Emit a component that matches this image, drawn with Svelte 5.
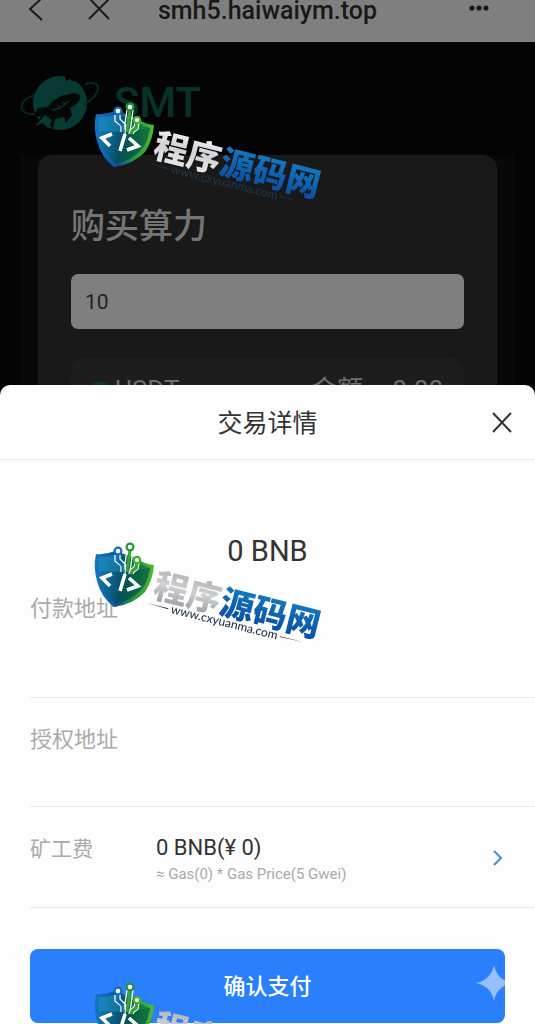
<script>
  let amount = '10';
  let open = true;

  const watermarks = [
    { id: 'top', dark: true },
    { id: 'middle', dark: false },
    { id: 'bottom', dark: false }
  ];

  const addresses = ['付款地址', '授权地址'];

  const closeSheet = () => {
    open = false;
  };
</script>

<div class="page">
  <header class="topbar">
    <div class="nav">
      <button class="icon-btn" aria-label="返回">
        <svg width="22" height="22" viewBox="0 0 22 22"><path d="M16 -2 4 9 16 20" /></svg>
      </button>
      <button class="icon-btn" aria-label="关闭">
        <svg width="22" height="22" viewBox="0 0 22 22"><path d="M1 -2 21 19M22 -2 1 19" /></svg>
      </button>
    </div>
    <h1>smh5.haiwaiym.top</h1>
    <button class="icon-btn more" aria-label="更多">
      <svg width="20" height="22" viewBox="0 0 20 22">
        <circle cx="3" cy="8" r="2.6" /><circle cx="10" cy="8" r="2.6" /><circle cx="17" cy="8" r="2.6" />
      </svg>
    </button>
  </header>

  <main>
    <div class="brand">
      <svg width="80" height="60" viewBox="0 0 80 60">
        <circle cx="40" cy="30" r="27" fill="#0f7565" />
        <path d="M44 0 46 8 50 6 54 9 58 5 58 0Z" fill="#080808" />
        <path d="M15 22C5 25 0 31 2 36c2 6 12 6 22 3M65 11c7-2 12-1 13 3 1 6-5 12-14 18" fill="none" stroke="#0c4f45" stroke-width="2" />
        <path d="M50 21c-10 1-19 7-22 13l-10 1-5 9 8-1-4 9 9-4 7 8 2-10 9-2 2 6 6-8-2-7c6-3 11-7 10-13q-6-3-10-1Z" fill="#0a0f0d" />
        <path d="M32 37l8-2 9-7M37 32l4 3M43 29l3 3" fill="none" stroke="#0f6557" stroke-width="1.5" />
        <path d="m25 42-10 11 10-4 3 7 4-9Z" fill="#0f7565" />
      </svg>
      <span>SMT</span>
    </div>

    <div class="panel">
      <section class="card">
        <h2><label for="amount">购买算力</label></h2>
        <input id="amount" type="text" inputmode="numeric" bind:value={amount} />
        <div class="asset">
          <svg width="16" height="16" viewBox="0 0 16 16">
            <rect width="16" height="16" rx="2" fill="#0f6f62" />
            <path d="M3 5h10M8 5v8" stroke="#2b2b2b" stroke-width="2" />
          </svg>
          <span>USDT</span>
          <span class="total">金额</span>
          <span>0.00</span>
        </div>
      </section>
    </div>
  </main>
</div>

{#if open}
  <div class="mask"></div>
  <div class="sheet" role="dialog" aria-modal="true" aria-labelledby="sheet-title">
    <div class="sheet-head">
      <h2 id="sheet-title">交易详情</h2>
      <button class="icon-btn" aria-label="关闭" on:click={closeSheet}>
        <svg width="22" height="22" viewBox="0 0 22 22"><path d="M2 1 20 20M20 1 2 20" /></svg>
      </button>
    </div>

    <p class="value">0 BNB</p>

    <div class="rows">
      {#each addresses as address}
        <div class="row">{address}</div>
      {/each}
      <button class="row fee">
        <span class="fee-label">矿工费</span>
        <span class="fee-text">
          <span class="fee-value">0 BNB(¥ 0)</span>
          <span class="fee-note">≈ Gas(0) * Gas Price(5 Gwei)</span>
        </span>
        <svg width="10" height="18" viewBox="0 0 10 18"><path d="M1 1 8 8 1 15" /></svg>
      </button>
    </div>

    <button class="confirm">
      确认支付
      <svg class="spark" width="36" height="36" viewBox="0 0 36 36">
        <path d="M18 0C20 10 26 16 36 18 26 20 20 26 18 36 16 26 10 20 0 18 10 16 16 10 18 0Z" />
      </svg>
    </button>
  </div>
{/if}

<div class="watermarks">
  {#each watermarks as mark (mark.id)}
    <svg class="watermark" class:dark={mark.dark} width="240" height="440" viewBox="0 0 240 440">
      <defs>
        <linearGradient id="edge-{mark.id}" x1="0" x2="1" y1="0" y2="0">
          <stop offset="0" stop-color="#1478be" />
          <stop offset="0.4" stop-color="#0e50a0" />
          <stop offset="0.65" stop-color="#27953c" />
          <stop offset="1" stop-color="#50ba2c" />
        </linearGradient>
        <linearGradient id="face-{mark.id}" x1="0" x2="1" y1="0.3" y2="0.5">
          <stop offset="0" stop-color="#1378b8" />
          <stop offset="0.45" stop-color="#07536f" />
          <stop offset="0.7" stop-color="#08743f" />
          <stop offset="1" stop-color="#249441" />
        </linearGradient>
        <linearGradient id="silver-{mark.id}" x1="0" x2="0" y1="0" y2="1">
          <stop offset="0" stop-color={mark.dark ? '#ffffff' : '#a2a4a8'} />
          <stop offset="0.5" stop-color={mark.dark ? '#d0d1d4' : '#cfd0d2'} />
          <stop offset="1" stop-color={mark.dark ? '#eeeeee' : '#8f9196'} />
        </linearGradient>
        <linearGradient id="blue-{mark.id}" x1="0" x2="0" y1="0" y2="1">
          <stop offset="0" stop-color="#1684cc" />
          <stop offset="1" stop-color="#08479b" />
        </linearGradient>
      </defs>

      <path fill="url(#edge-{mark.id})" d="M6 18Q15 19 25 15L47 22Q54 28 64 29Q63 44 55 56Q44 68 24 71Q11 61 7 45Q3 31 6 18Z" />
      <path fill="url(#face-{mark.id})" d="M9 21Q18 22 27 18L46 25Q53 30 60 32Q58 46 51 54Q41 65 25 68Q14 59 10 44Q7 31 9 21Z" />
      <path fill="#21a0d0" opacity="0.35" d="M9 21Q18 22 27 18L33 36 9 35Z" />
      <path fill="#043c4b" opacity="0.35" d="M33 36 60 32Q58 46 51 54Q41 65 25 68Z" />

      <g fill="none" stroke-linejoin="round">
        <path stroke="#fff" stroke-width="1.3" d="M25 19 25 25 31 30 31 36M30 19 30 23 36 29 35 38M37 14 34 34M43 14 40 36M45 27 44 31 40 34 39 38M49 27 48 33 44 36 43 38" />
        <path stroke="#146db5" stroke-width="2.5" d="M28 18 27 24 33 30 33 36" />
        <path stroke="#35a62f" stroke-width="3" d="M40 14 37 36M47 26 46 32 42 35 41 38" />
        <circle cx="28" cy="15" r="3.4" fill="#fff" stroke="#176db7" stroke-width="2.2" />
        <circle cx="40" cy="11" r="3.4" fill="#fff" stroke="#269535" stroke-width="2.2" />
        <circle cx="47" cy="24" r="3.2" fill="#fff" stroke="#43ae2c" stroke-width="2.2" />
      </g>
      <path d="M22 38 12 42 20 50M35 38 30 55M39 42 48 50 37 54" fill="none" stroke="#fff" stroke-width="3.6" />

      <g transform="translate(65 48) rotate(14)">
        <text class="mark-name" x="0" y="13">
          <tspan fill="url(#silver-{mark.id})">程序</tspan><tspan fill="url(#blue-{mark.id})">源码网</tspan>
        </text>
      </g>
      <g class="mark-site" transform="translate(57 67) rotate(14)">
        <path d="M0 0 22 0 22 1ZM137 0 137 1 161 0Z" />
        <text x="25" y="4">www.cxyuanma.com</text>
      </g>
    </svg>
  {/each}
</div>

<style>
  :global(body) {
    background: #040404;
    font-family: Roboto, 'Noto Sans CJK SC', sans-serif;
  }

  h1,
  h2,
  p {
    margin: 0;
    font-weight: 400;
  }

  button {
    padding: 0;
    border: 0;
    background: none;
    font: inherit;
    cursor: pointer;
  }

  .icon-btn {
    display: flex;
  }

  .icon-btn svg {
    fill: none;
    stroke: #333;
    stroke-width: 2;
  }

  .page {
    height: 100vh;
    overflow: hidden;
    background: #080808;
  }

  .topbar {
    display: grid;
    grid-template-columns: 1fr auto 1fr;
    align-items: start;
    padding: 0 26px 20px;
    background: #fff;
  }

  .topbar h1 {
    font-size: 25px;
    font-weight: 500;
    line-height: 22px;
    color: #333;
  }

  .nav {
    display: flex;
    gap: 40px;
  }

  .topbar .more {
    justify-self: end;
    margin-right: 20px;
  }

  .topbar .more svg {
    fill: #333;
    stroke: none;
  }

  .brand {
    display: flex;
    align-items: center;
    gap: 14px;
    padding: 31px 20px 22px;
    font-size: 42px;
    font-weight: 500;
    line-height: 60px;
    color: #0d6456;
  }

  .panel {
    margin: 0 21px;
    padding: 0 17px;
    background: #101010;
  }

  .card {
    padding: 48px 32px;
    border: 1px solid #37373c;
    border-radius: 14px;
    background: #323232;
  }

  .card h2 {
    font-size: 34px;
    font-weight: 500;
    line-height: 44px;
    color: #fff;
    opacity: 0.9;
  }

  .card input {
    box-sizing: border-box;
    width: 100%;
    height: 55px;
    margin: 26px 0 29px;
    padding: 0 14px;
    border: 0;
    border-radius: 7px;
    background: #fff;
    font: 21px Roboto, sans-serif;
    color: #444;
  }

  .asset {
    display: flex;
    align-items: center;
    gap: 7px;
    padding: 16px 21px;
    border-radius: 14px;
    background: #3a3a3a;
    font-size: 26px;
    line-height: 32px;
    color: #ddd;
  }

  .asset .total {
    margin: 0 22px 0 auto;
  }

  .mask {
    position: fixed;
    inset: 0;
    background: rgba(0, 0, 0, 0.5);
  }

  .sheet {
    position: fixed;
    inset: auto 0 0;
    border-radius: 10px 10px 0 0;
    background: #fdfdfd;
    color: #333;
  }

  .sheet-head {
    display: grid;
    grid-template-columns: 1fr auto 1fr;
    align-items: center;
    padding: 2px 22px 0;
    border-bottom: 1px solid #eee;
  }

  .sheet-head h2 {
    grid-column: 2;
    padding-top: 2px;
    font-size: 25px;
    line-height: 70px;
  }

  .sheet-head .icon-btn {
    justify-self: end;
  }

  .value {
    padding-top: 71px;
    font-size: 29px;
    line-height: 40px;
    text-align: center;
  }

  .rows {
    padding-left: 30px;
    font-size: 22px;
    line-height: 32px;
    color: #aaa;
  }

  .row {
    padding: 26px 0 50px;
    border-bottom: 1px solid #e9e9e9;
  }

  .row:first-child {
    padding: 22px 0 72px;
  }

  .fee {
    display: grid;
    grid-template-columns: 126px 1fr auto;
    width: 100%;
    padding: 26px 32px 22px 0;
    color: #aaa;
    text-align: left;
  }

  .fee-label {
    font-size: 21px;
  }

  .fee-text {
    display: grid;
  }

  .fee-value {
    font-size: 22px;
    line-height: 30px;
    color: #333;
  }

  .fee-note {
    font-size: 15px;
    line-height: 22px;
  }

  .fee svg {
    align-self: center;
    fill: none;
    stroke: #4a8ccc;
    stroke-width: 2;
  }

  .confirm {
    position: relative;
    display: block;
    width: calc(100% - 60px);
    margin: 41px 30px 1px;
    padding-top: 2px;
    border-radius: 8px;
    background: #2a7ffc;
    font-size: 22px;
    font-weight: 500;
    line-height: 72px;
    color: #fff;
  }

  .spark {
    position: absolute;
    top: 16px;
    right: -7px;
    fill: rgba(255, 255, 255, 0.5);
  }

  .watermarks {
    position: fixed;
    inset: 0;
    display: flex;
    flex-direction: column;
    padding: 96px 0 0 90px;
    overflow: hidden;
    pointer-events: none;
  }

  .watermark {
    flex: none;
  }

  .mark-name {
    font-family: 'Noto Sans CJK SC', sans-serif;
    font-size: 34px;
    font-weight: 900;
  }

  .mark-site {
    font-family: Lato, sans-serif;
    font-size: 12px;
    font-weight: 500;
    fill: #26344c;
  }

  .dark .mark-site {
    fill: #20364c;
  }
</style>
